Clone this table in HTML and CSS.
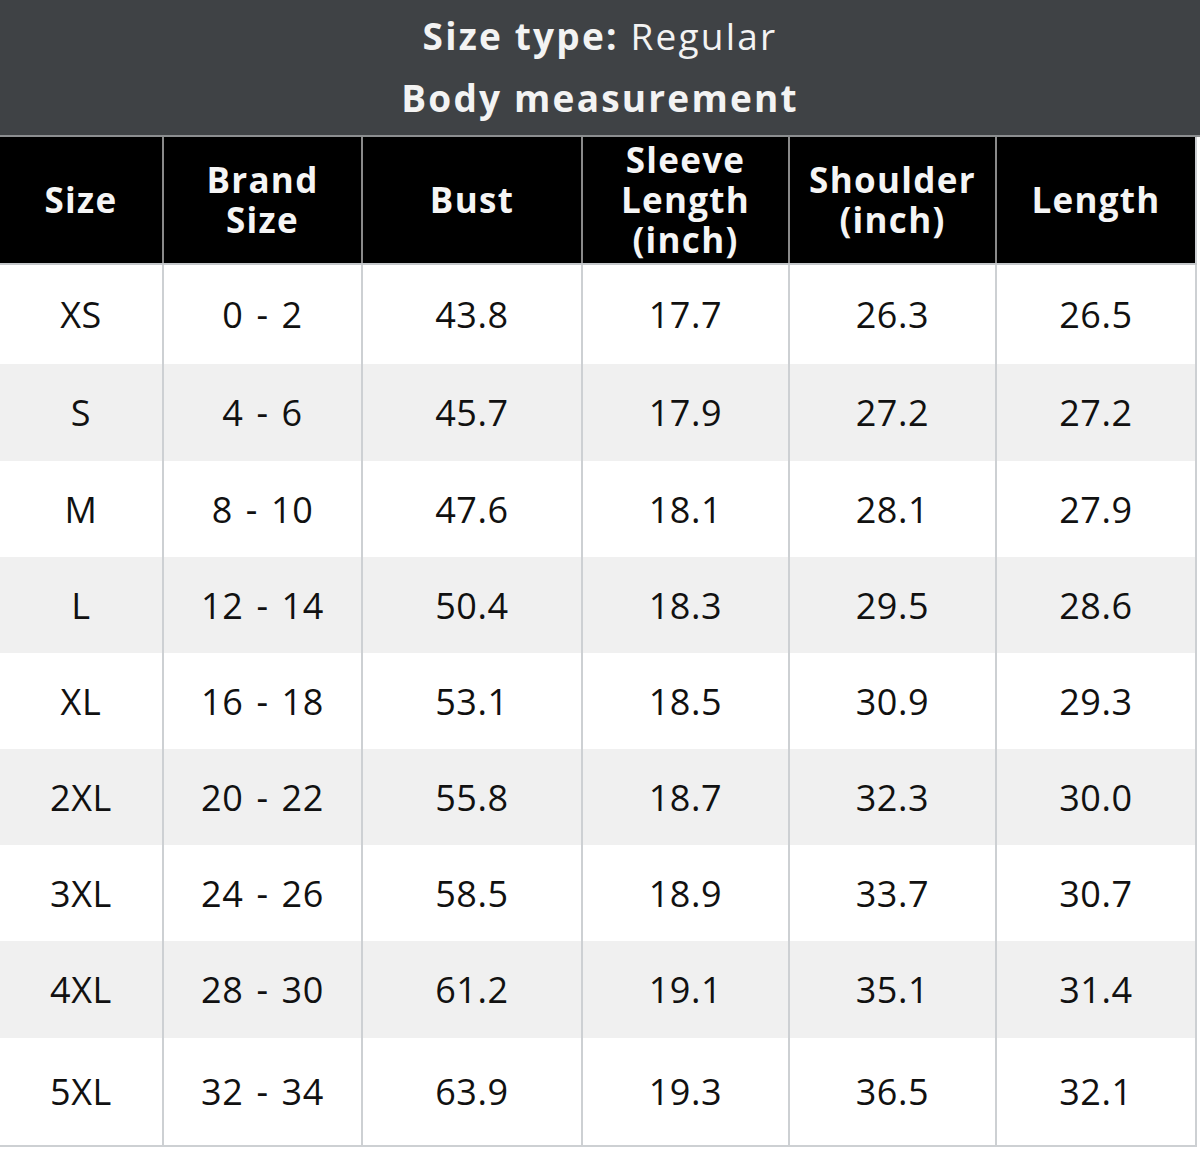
FILE: index.html
```html
<!DOCTYPE html>
<html lang="en">
<head>
<meta charset="utf-8">
<title>Size chart</title>
<link rel="stylesheet" href="styles.css">
</head>
<body>
<div class="chart">
  <header class="title">
    <div class="title-line"><b>Size type:</b> Regular</div>
    <div class="title-line"><b>Body measurement</b></div>
  </header>
  <table class="sizes">
    <colgroup>
      <col class="c1"><col class="c2"><col class="c3"><col class="c4"><col class="c5"><col class="c6">
    </colgroup>
    <thead>
      <tr>
        <th>Size</th>
        <th>Brand<br>Size</th>
        <th>Bust</th>
        <th>Sleeve<br>Length<br>(inch)</th>
        <th>Shoulder<br>(inch)</th>
        <th>Length</th>
      </tr>
    </thead>
    <tbody>
      <tr class="r-first"><td>XS</td><td>0 - 2</td><td>43.8</td><td>17.7</td><td>26.3</td><td>26.5</td></tr>
      <tr class="alt r97"><td>S</td><td>4 - 6</td><td>45.7</td><td>17.9</td><td>27.2</td><td>27.2</td></tr>
      <tr><td>M</td><td>8 - 10</td><td>47.6</td><td>18.1</td><td>28.1</td><td>27.9</td></tr>
      <tr class="alt"><td>L</td><td>12 - 14</td><td>50.4</td><td>18.3</td><td>29.5</td><td>28.6</td></tr>
      <tr><td>XL</td><td>16 - 18</td><td>53.1</td><td>18.5</td><td>30.9</td><td>29.3</td></tr>
      <tr class="alt"><td>2XL</td><td>20 - 22</td><td>55.8</td><td>18.7</td><td>32.3</td><td>30.0</td></tr>
      <tr><td>3XL</td><td>24 - 26</td><td>58.5</td><td>18.9</td><td>33.7</td><td>30.7</td></tr>
      <tr class="alt r97"><td>4XL</td><td>28 - 30</td><td>61.2</td><td>19.1</td><td>35.1</td><td>31.4</td></tr>
      <tr class="r-last"><td>5XL</td><td>32 - 34</td><td>63.9</td><td>19.3</td><td>36.5</td><td>32.1</td></tr>
    </tbody>
  </table>
</div>
</body>
</html>
```

FILE: styles.css
```css
html, body {
  margin: 0;
  padding: 0;
  background: #ffffff;
}

body {
  font-family: "Open Sans", "Liberation Sans", sans-serif;
  width: 1200px;
}

.chart {
  width: 1200px;
}

.title {
  background: #3f4245;
  color: #f3f3f3;
  height: 137px;
  box-sizing: border-box;
  padding-top: 5px;
  text-align: center;
  border-bottom: 2px solid #8c8e90;
}

.title-line {
  font-size: 37px;
  line-height: 62px;
  font-weight: 400;
  letter-spacing: 2.2px;
}

.title-line b {
  font-weight: 700;
}

.sizes {
  width: 1196px;
  table-layout: fixed;
  border-collapse: collapse;
  border-right: 2px solid #cdd0d3;
  border-bottom: 2px solid #cdd0d3;
}

.c1 { width: 163px; }
.c2 { width: 199px; }
.c3 { width: 220px; }
.c4 { width: 207px; }
.c5 { width: 207px; }
.c6 { width: 200px; }

.sizes th {
  background: #000000;
  color: #f5f5f5;
  font-size: 35px;
  font-weight: 700;
  line-height: 40px;
  letter-spacing: 1.3px;
  height: 126px;
  padding: 0;
  text-align: center;
  vertical-align: middle;
  border-left: 2px solid #8a8a8a;
  border-bottom: 2px solid #c4c7ca;
}

.sizes th:first-child,
.sizes td:first-child {
  border-left: none;
}

.sizes td {
  font-size: 36px;
  font-weight: 400;
  letter-spacing: 0.6px;
  word-spacing: 3px;
  color: #111111;
  text-align: center;
  vertical-align: middle;
  height: 96px;
  padding: 0;
  border-left: 2px solid #cdd0d3;
}

.sizes tr.alt td {
  background: #f0f0f0;
}

.sizes tr.r-first td {
  height: 99px;
}

.sizes tr.r97 td {
  height: 97px;
}

.sizes tr.r-last td {
  height: 107px;
}
```
